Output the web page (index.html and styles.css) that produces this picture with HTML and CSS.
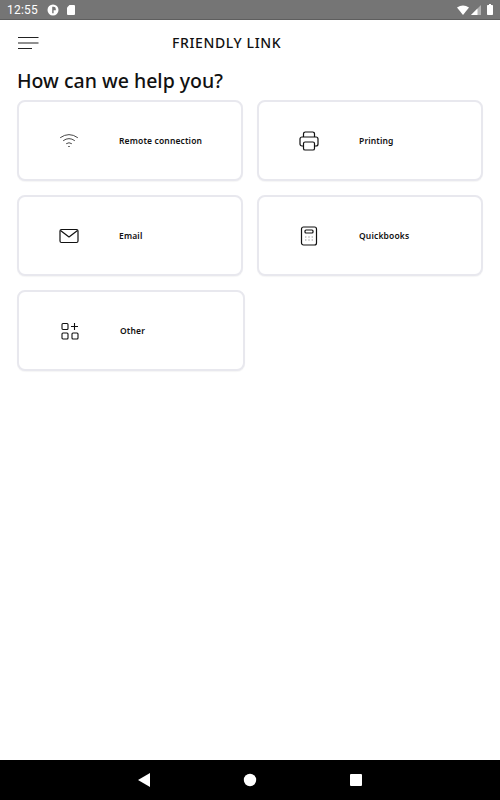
FILE: index.html
```html
<!DOCTYPE html>
<html lang="en">

<head>
    <meta charset="UTF-8">
    <meta name="viewport" content="width=device-width, initial-scale=1.0">
    <title>Friendly Link</title>
    <link rel="stylesheet" href="styles.css">
</head>

<body>
    <div class="status-bar">
        <div class="status-left">
            <span class="clock">12:55</span>
            <svg class="status-icon" width="14" height="14" viewBox="0 0 14 14">
                <circle cx="7" cy="7" r="5.5" fill="#fff" />
                <path d="M6.2 3.8H7.6A2.2 2.2 0 0 1 9.8 6V7.2H7.6V10.2H6.2z" fill="#757575" />
            </svg>
            <svg class="status-icon" width="10" height="12" viewBox="0 0 10 12">
                <path d="M3.5 1H8a1 1 0 0 1 1 1v8a1 1 0 0 1-1 1H2a1 1 0 0 1-1-1V3.5z" fill="#fff" />
            </svg>
        </div>
        <div class="status-right">
            <svg class="wifi" width="12" height="10" viewBox="0 0 12 10">
                <path d="M0 2.4Q6 -1.6 12 2.4L6 10z" fill="#fff" />
            </svg>
            <svg class="signal" width="10" height="10" viewBox="0 0 10 10">
                <path d="M10 0V10H0z" fill="#fff" fill-opacity="0.45" />
                <path d="M6.5 3.5V10H0z" fill="#fff" />
            </svg>
            <svg width="6" height="11" viewBox="0 0 6 11">
                <path d="M2 0H4V1H5.2A0.8 0.8 0 0 1 6 1.8V10.2A0.8 0.8 0 0 1 5.2 11H0.8A0.8 0.8 0 0 1 0 10.2V1.8A0.8 0.8 0 0 1 0.8 1H2z" fill="#fff" />
            </svg>
        </div>
    </div>

    <header class="app-bar">
        <svg class="menu-icon" width="21" height="14" viewBox="0 0 21 14">
            <path d="M0 1.5H20.5M0 7H20.5M0 12.5H14" stroke="#222" stroke-width="1.2" fill="none" />
        </svg>
        <h1 class="app-title">FRIENDLY LINK</h1>
    </header>

    <main class="content">
        <h2 class="heading">How can we help you?</h2>
        <div class="grid">
            <a class="card">
                <span class="card-icon">
                    <svg width="20" height="16" viewBox="0 0 20 16" fill="none" stroke="#333" stroke-width="0.9" stroke-linecap="round">
                        <path d="M1.5 4.5Q10 -1.5 18.5 4.5" />
                        <path d="M4.5 7.5Q10 3.5 15.5 7.5" />
                        <path d="M7.5 10.5Q10 8.8 12.5 10.5" />
                        <path d="M9.6 13.5H10.4" />
                    </svg>
                </span>
                <span class="card-label">Remote connection</span>
            </a>
            <a class="card">
                <span class="card-icon">
                    <svg width="20" height="20" viewBox="0 0 20 20" fill="none" stroke="#111" stroke-width="1.2" stroke-linejoin="round">
                        <path d="M4.5 6V2.8A1.8 1.8 0 0 1 6.3 1H13.7A1.8 1.8 0 0 1 15.5 2.8V6" />
                        <path d="M4.5 15H3A2 2 0 0 1 1 13V8A2 2 0 0 1 3 6H17A2 2 0 0 1 19 8V13A2 2 0 0 1 17 15H15.5" />
                        <rect x="4.5" y="11" width="11" height="8" rx="1.6" />
                    </svg>
                </span>
                <span class="card-label">Printing</span>
            </a>
            <a class="card">
                <span class="card-icon">
                    <svg width="20" height="16" viewBox="0 0 20 16" fill="none" stroke="#111" stroke-width="1.2" stroke-linejoin="round">
                        <rect x="1" y="1.5" width="18" height="13" rx="1.5" />
                        <path d="M1.5 2.5L10 9L18.5 2.5" />
                    </svg>
                </span>
                <span class="card-label">Email</span>
            </a>
            <a class="card">
                <span class="card-icon">
                    <svg width="18" height="20" viewBox="0 0 18 20" fill="none" stroke="#111" stroke-width="1.2">
                        <rect x="1.5" y="1" width="15" height="18" rx="2" />
                        <rect x="5" y="4" width="8" height="3" rx="1" />
                        <path d="M5 11H13M5 14H13" stroke="#999" stroke-dasharray="1.4 1.9" />
                    </svg>
                </span>
                <span class="card-label">Quickbooks</span>
            </a>
            <a class="card card-last">
                <span class="card-icon">
                    <svg width="18" height="18" viewBox="0 0 18 18" fill="none" stroke="#111" stroke-width="1.1">
                        <rect x="1" y="1.5" width="6" height="6" rx="1" />
                        <path d="M13.5 1V8M10 4.5H17" />
                        <rect x="1" y="11" width="6" height="6" rx="1" />
                        <rect x="11" y="11" width="6" height="6" rx="1" />
                    </svg>
                </span>
                <span class="card-label">Other</span>
            </a>
        </div>
    </main>

    <nav class="nav-bar">
        <svg width="14" height="16" viewBox="0 0 14 16">
            <path d="M13 1V15L1 8z" fill="#fff" />
        </svg>
        <svg width="14" height="14" viewBox="0 0 14 14">
            <circle cx="7" cy="7" r="6.2" fill="#fff" />
        </svg>
        <svg width="14" height="14" viewBox="0 0 14 14">
            <rect x="1" y="1" width="12" height="12" rx="1" fill="#fff" />
        </svg>
    </nav>
</body>

</html>
```

FILE: styles.css
```css
* {
    box-sizing: border-box;
}

body {
    margin: 0;
    height: 800px;
    display: flex;
    flex-direction: column;
    font-family: "Noto Sans", sans-serif;
    background: white;
    overflow: hidden;
}

.status-bar {
    height: 20px;
    padding: 0 7px;
    background: #757575;
    border-bottom: 1px solid #5e5e5e;
    display: flex;
    justify-content: space-between;
    align-items: center;
}

.status-left {
    display: flex;
    align-items: center;
    gap: 6px;
}

.clock {
    color: white;
    font-family: Roboto, sans-serif;
    font-size: 12px;
    letter-spacing: 0.2px;
    margin-right: 2px;
}

.status-right {
    display: flex;
    align-items: center;
}

.wifi {
    margin-right: 2px;
}

.signal {
    margin-right: 6px;
}

.app-bar {
    height: 46px;
    padding-left: 18px;
    display: flex;
    align-items: center;
}

.menu-icon {
    flex: none;
}

.app-title {
    margin: 0 0 2px 133px;
    font-size: 14px;
    font-weight: 500;
    letter-spacing: 0.62px;
    color: #111;
}

.content {
    flex: 1;
    padding: 0 17px;
}

.heading {
    margin: 1px 0 5px;
    height: 28px;
    line-height: 28px;
    font-size: 19.5px;
    font-weight: 500;
    color: #111;
}

.grid {
    display: grid;
    grid-template-columns: 226px 226px;
    grid-auto-rows: 81px;
    column-gap: 14px;
    row-gap: 14px;
}

.card {
    display: flex;
    align-items: center;
    background: white;
    border: 2px solid #e8e8ee;
    border-radius: 8px;
    box-shadow: 0 1px 1px rgba(0, 0, 0, 0.04);
}

.card-last {
    width: 228px;
}

.card-icon {
    width: 100px;
    display: flex;
    justify-content: center;
    flex: none;
}

.card-last .card-icon {
    width: 101px;
}

.card-label {
    font-size: 8.5px;
    font-weight: 600;
    letter-spacing: 0.15px;
    color: #111;
}

.nav-bar {
    height: 40px;
    padding: 0 137px;
    background: black;
    display: flex;
    justify-content: space-between;
    align-items: center;
}
```
